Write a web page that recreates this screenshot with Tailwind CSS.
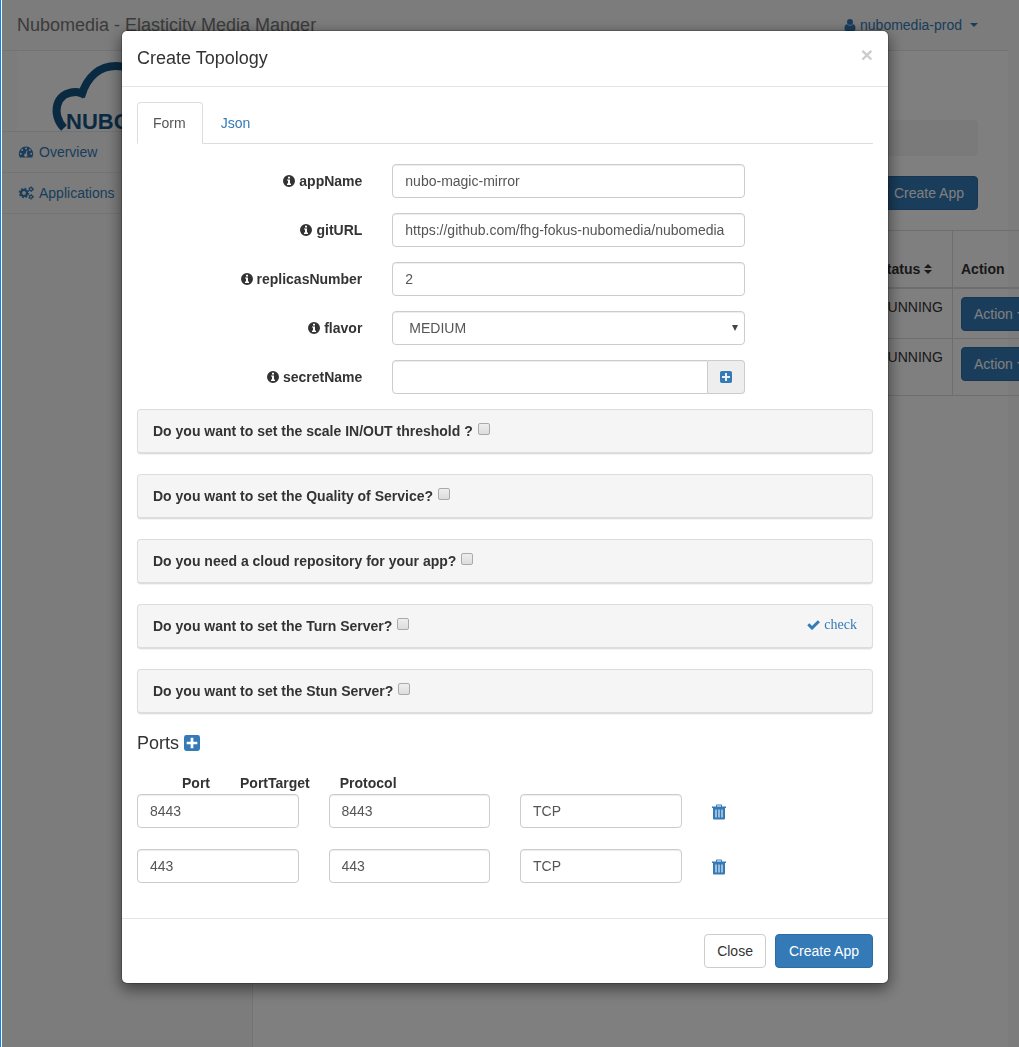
<!DOCTYPE html>
<html lang="en">
<head>
<meta charset="utf-8">
<meta name="viewport" content="width=device-width, initial-scale=1">
<title>Nubomedia - Create Topology</title>
<script src="https://cdn.jsdelivr.net/npm/@tailwindcss/browser@4"></script>
</head>
<body class="font-['Liberation_Sans',Arial,sans-serif] text-sm text-[#333] bg-[#f8f8f8]">

<!-- Shared icons -->
<svg class="hidden" aria-hidden="true">
  <symbol id="info" viewBox="0 0 12 12"><path fill="currentColor" fill-rule="evenodd" d="M6 0a6 6 0 1 1 0 12A6 6 0 0 1 6 0ZM5 1.800v1.700h2V1.800H5ZM4 4.500v1h1v3H4v1.500h4V8.500H7v-4H4Z"/></symbol>
  <symbol id="plus" viewBox="0 0 12 12"><path fill="currentColor" fill-rule="evenodd" d="M1.800 0h8.400A1.800 1.800 0 0 1 12 1.800v8.400A1.800 1.800 0 0 1 10.200 12H1.800A1.800 1.800 0 0 1 0 10.200V1.800A1.800 1.800 0 0 1 1.800 0ZM5 2V5H2v2h3v3h2V7h3V5H7V2H5Z"/></symbol>
  <symbol id="trash" viewBox="0 0 14 16"><path fill="currentColor" fill-rule="evenodd" d="M4 2.500V1.500Q4 .5 5 .5h4q1 0 1 1v1h4V4h-1v10.500q0 1-1 1H2q-1 0-1-1V4H0V2.500h4Zm1 0h4v-1H5v1ZM3.500 5.500v8h1v-8h-1Zm3 0v8h1v-8h-1Zm3 0v8h1v-8h-1Z"/></symbol>
  <symbol id="caret" viewBox="0 0 8 4"><path fill="currentColor" d="M0 0h8L4 4Z"/></symbol>
</svg>

<div class="border-l border-[#0f82e6]">
<div class="ml-px pr-[11px] flex flex-col min-h-screen overflow-hidden">
  <header class="h-[51px] border-b border-[#e7e7e7] flex items-center justify-between pl-[15px] pr-[30px]">
    <a href="#" class="text-lg text-[#777] whitespace-nowrap">Nubomedia - Elasticity Media Manger</a>
    <a href="#" class="flex items-center text-[#337ab7]">
      <svg class="w-3 h-3 mr-1" viewBox="0 0 12 12" fill="currentColor"><circle cx="6" cy="3" r="3"/><path d="M3 5.300Q6 8 9 5.300Q11.500 5.500 11.500 9.800Q11.500 12 9.500 12h-7Q.5 12 .5 9.800Q.5 5.500 3 5.300Z"/></svg>
      nubomedia-prod
      <svg class="w-2 h-1 ml-2"><use href="#caret"/></svg>
    </a>
  </header>
  <div class="flex grow">
    <nav class="w-[251px] shrink-0 border-r border-[#e7e7e7]">
      <div class="pl-[15px] h-[81px] border-b border-[#e7e7e7]">
        <svg class="w-full h-20 bg-[#fdfdfd]" viewBox="0 0 235 80" preserveAspectRatio="xMinYMin slice">
          <g fill="none" stroke="#145585" stroke-width="8">
            <path d="M47 77C34 64 38 41 59 41Q63 41 68 44"/>
            <path d="M64 46C70 24 84 15 99 15C119 15 131 25 134 40"/>
          </g>
          <text x="49" y="78" font-family="Liberation Sans, sans-serif" font-weight="bold" font-size="22" fill="#145585">NUBOMEDIA</text>
        </svg>
      </div>
      <ul class="text-[#337ab7]">
        <li class="border-b border-[#e7e7e7]"><a href="#" class="flex items-center gap-1 h-10 px-[15px]">
          <svg class="w-[18px] h-[14px]" viewBox="0 0 18 14"><path fill="currentColor" fill-rule="evenodd" d="M9 1.500a7.200 7.200 0 0 1 7.200 7.300q0 2-1 3.700H2.800q-1-1.700-1-3.700A7.200 7.200 0 0 1 9 1.500ZM9 2.500a1 1 0 1 0 0 2 1 1 0 0 0 0-2ZM5.200 4a1 1 0 1 0 0 2 1 1 0 0 0 0-2Zm7.600 0a1 1 0 1 0 0 2 1 1 0 0 0 0-2ZM3.800 7.800a1 1 0 1 0 0 2 1 1 0 0 0 0-2Zm10.400 0a1 1 0 1 0 0 2 1 1 0 0 0 0-2ZM9.600 5.500 8.800 8.600a1.600 1.600 0 1 0 1 .3l.8-3.100Z"/></svg>
          Overview</a></li>
        <li class="border-b border-[#e7e7e7]"><a href="#" class="flex items-center gap-1 h-10 px-[15px]">
          <svg class="w-[18px] h-[14px]" viewBox="0 0 18 14" fill="none" stroke="currentColor"><circle cx="7" cy="7" r="3" stroke-width="2.200"/><circle cx="7" cy="7" r="4.500" stroke-width="1.500" stroke-dasharray="1.770 1.765"/><circle cx="14" cy="3.200" r="1.500" stroke-width="1.200"/><circle cx="14" cy="3.200" r="2.300" stroke-width="1" stroke-dasharray="1.200 1.200"/><circle cx="14" cy="10.800" r="1.500" stroke-width="1.200"/><circle cx="14" cy="10.800" r="2.300" stroke-width="1" stroke-dasharray="1.200 1.200"/></svg>
          Applications</a></li>
      </ul>
    </nav>
    <main class="grow min-w-0 bg-white px-[30px] pt-[69px]">
      <div class="h-9 rounded bg-[#f5f5f5]"></div>
      <div class="flex justify-end mt-5">
        <button class="h-[34px] px-[13px] rounded border border-[#2e6da4] bg-[#337ab7] text-white">Create App</button>
      </div>
      <table class="mt-5 w-[760px] table-fixed border-collapse border border-[#ddd] text-left">
        <thead>
          <tr class="h-[57px] align-bottom border-b-2 border-[#ddd]">
            <td></td>
            <th class="w-[83px] p-2 border-r border-[#ddd] leading-5 whitespace-nowrap">Status <svg class="inline w-2 h-[10px] -mt-0.5" viewBox="0 0 8 10" fill="currentColor"><path d="M0 4 4 0l4 4ZM0 6h8l-4 4Z"/></svg></th>
            <th class="w-[90px] p-2 leading-5">Action</th>
          </tr>
        </thead>
        <tbody>
          <tr class="h-[51px] align-top border-b border-[#ddd]">
            <td></td><td class="p-2 border-r border-[#ddd]">RUNNING</td>
            <td class="px-2 pt-2"><button class="flex items-center gap-1 h-[34px] px-3 rounded border border-[#2e6da4] bg-[#337ab7] text-white">Action <svg class="w-2 h-1"><use href="#caret"/></svg></button></td>
          </tr>
          <tr class="h-[57px] align-top">
            <td></td><td class="p-2 border-r border-[#ddd]">RUNNING</td>
            <td class="px-2 pt-2"><button class="flex items-center gap-1 h-[34px] px-3 rounded border border-[#2e6da4] bg-[#337ab7] text-white">Action <svg class="w-2 h-1"><use href="#caret"/></svg></button></td>
          </tr>
        </tbody>
      </table>
    </main>
  </div>
</div>
</div>

<!-- Modal -->
<div class="fixed inset-y-0 right-0 left-0.5 overflow-auto bg-black/50 pt-[30px] pr-[11px]">
  <section role="dialog" aria-labelledby="dialog-title" class="mx-auto max-w-[768px] rounded-md border border-black/20 bg-white bg-clip-padding shadow-[0_5px_15px_rgba(0,0,0,0.5)]">
    <div class="flex justify-between p-[15px] h-14 border-b border-[#e5e5e5]">
      <h4 id="dialog-title" class="text-lg leading-6">Create Topology</h4>
      <button aria-label="Close" class="self-start h-[18px] text-[21px] leading-[18px] font-bold text-[#ccc]">×</button>
    </div>
    <div class="p-[15px]">
      <div class="flex h-[42px] border-b border-[#ddd]">
        <a href="#" class="h-[42px] pl-[15px] pr-4 leading-10 rounded-t border border-[#ddd] border-b-white bg-white text-[#555]">Form</a>
        <a href="#" class="ml-0.5 px-4 leading-[42px] text-[#337ab7]">Json</a>
      </div>

      <form>
        <div class="-mx-[15px] mt-5 grid grid-cols-[4fr_6fr_2fr] gap-y-[15px] *:mx-[15px]">
          <label for="appName" class="col-start-1 flex items-center justify-end gap-1 font-bold"><svg class="size-3"><use href="#info"/></svg>appName</label>
          <input id="appName" value="nubo-magic-mirror" class="min-w-0 h-[34px] px-3 rounded border border-[#ccc] text-[#555] shadow-[inset_0_1px_1px_rgba(0,0,0,0.075)]">

          <label for="gitURL" class="col-start-1 flex items-center justify-end gap-1 font-bold"><svg class="size-3"><use href="#info"/></svg>gitURL</label>
          <input id="gitURL" value="https://github.com/fhg-fokus-nubomedia/nubomedia" class="min-w-0 h-[34px] px-3 rounded border border-[#ccc] text-[#555] shadow-[inset_0_1px_1px_rgba(0,0,0,0.075)]">

          <label for="replicas" class="col-start-1 flex items-center justify-end gap-1 font-bold"><svg class="size-3"><use href="#info"/></svg>replicasNumber</label>
          <input id="replicas" value="2" class="min-w-0 h-[34px] px-3 rounded border border-[#ccc] text-[#555] shadow-[inset_0_1px_1px_rgba(0,0,0,0.075)]">

          <label for="flavor" class="col-start-1 flex items-center justify-end gap-1 font-bold"><svg class="size-3"><use href="#info"/></svg>flavor</label>
          <div class="relative flex">
            <select id="flavor" class="grow appearance-none h-[34px] px-4 rounded border border-[#ccc] bg-white text-[#555] shadow-[inset_0_1px_1px_rgba(0,0,0,0.075)]"><option>MEDIUM</option></select>
            <svg class="absolute right-[7px] top-[14px] w-1.5 h-1.5 pointer-events-none text-[#444]" viewBox="0 0 6 6"><path fill="currentColor" d="M0 0h6L3 6Z"/></svg>
          </div>

          <label for="secret" class="col-start-1 flex items-center justify-end gap-1 font-bold"><svg class="size-3"><use href="#info"/></svg>secretName</label>
          <div class="flex">
            <input id="secret" class="min-w-0 grow h-[34px] px-3 rounded-l border border-[#ccc] text-[#555] shadow-[inset_0_1px_1px_rgba(0,0,0,0.075)]">
            <button type="button" aria-label="Add secret" class="w-[37px] flex items-center justify-center rounded-r border border-l-0 border-[#ccc] bg-[#eee] text-[#337ab7]"><svg class="size-3"><use href="#plus"/></svg></button>
          </div>
        </div>

        <div class="mt-[15px] flex flex-col gap-5 font-bold">
          <div class="flex items-center h-[45px] px-[15px] rounded border border-b-2 border-[#ddd] bg-[#f5f5f5] shadow-[0_1px_1px_rgba(0,0,0,0.05)]">
            <label for="scale">Do you want to set the scale IN/OUT threshold ?</label>
            <input id="scale" type="checkbox" class="ml-[5px] mb-1 size-3 appearance-none rounded-xs border border-[#aaa] bg-linear-to-b from-[#eee] to-[#dcdcdc]">
          </div>
          <div class="flex items-center h-[45px] px-[15px] rounded border border-b-2 border-[#ddd] bg-[#f5f5f5] shadow-[0_1px_1px_rgba(0,0,0,0.05)]">
            <label for="qos">Do you want to set the Quality of Service?</label>
            <input id="qos" type="checkbox" class="ml-[5px] mb-1 size-3 appearance-none rounded-xs border border-[#aaa] bg-linear-to-b from-[#eee] to-[#dcdcdc]">
          </div>
          <div class="flex items-center h-[45px] px-[15px] rounded border border-b-2 border-[#ddd] bg-[#f5f5f5] shadow-[0_1px_1px_rgba(0,0,0,0.05)]">
            <label for="repo">Do you need a cloud repository for your app?</label>
            <input id="repo" type="checkbox" class="ml-[5px] mb-1 size-3 appearance-none rounded-xs border border-[#aaa] bg-linear-to-b from-[#eee] to-[#dcdcdc]">
          </div>
          <div class="flex items-center h-[45px] px-[15px] rounded border border-b-2 border-[#ddd] bg-[#f5f5f5] shadow-[0_1px_1px_rgba(0,0,0,0.05)]">
            <label for="turn">Do you want to set the Turn Server?</label>
            <input id="turn" type="checkbox" class="ml-[5px] mb-1 size-3 appearance-none rounded-xs border border-[#aaa] bg-linear-to-b from-[#eee] to-[#dcdcdc]">
            <a href="#" class="ml-auto mb-0.5 flex items-center gap-1 font-normal font-['Liberation_Serif',serif] text-[#337ab7]"><svg class="w-[13px] h-[10px]" viewBox="0 0 13 10"><path fill="none" stroke="currentColor" stroke-width="3" d="m1.300 4.300 3.700 3.700L11.900 1.200"/></svg>check</a>
          </div>
          <div class="flex items-center h-[45px] px-[15px] rounded border border-b-2 border-[#ddd] bg-[#f5f5f5] shadow-[0_1px_1px_rgba(0,0,0,0.05)]">
            <label for="stun">Do you want to set the Stun Server?</label>
            <input id="stun" type="checkbox" class="ml-[5px] mb-1 size-3 appearance-none rounded-xs border border-[#aaa] bg-linear-to-b from-[#eee] to-[#dcdcdc]">
          </div>
        </div>

        <h4 class="mt-[19px] flex items-center gap-[5px] text-lg leading-5">Ports <button type="button" aria-label="Add port" class="text-[#337ab7]"><svg class="size-4"><use href="#plus"/></svg></button></h4>

        <div class="mt-5 flex gap-[30px] pl-[45px] font-bold leading-5">
          <span id="port">Port</span><span id="target">PortTarget</span><span id="protocol">Protocol</span>
        </div>
        <div class="mt-px mb-5 grid grid-cols-4 items-center gap-x-[30px] gap-y-[21px]">
          <input aria-labelledby="port" value="8443" class="min-w-0 h-[34px] px-3 rounded border border-[#ccc] text-[#555] shadow-[inset_0_1px_1px_rgba(0,0,0,0.075)]">
          <input aria-labelledby="target" value="8443" class="min-w-0 h-[34px] px-3 rounded border border-[#ccc] text-[#555] shadow-[inset_0_1px_1px_rgba(0,0,0,0.075)]">
          <input aria-labelledby="protocol" value="TCP" class="min-w-0 h-[34px] px-3 rounded border border-[#ccc] text-[#555] shadow-[inset_0_1px_1px_rgba(0,0,0,0.075)]">
          <button type="button" aria-label="Delete port" class="justify-self-start pt-0.5 text-[#337ab7]"><svg class="w-3.5 h-4"><use href="#trash"/></svg></button>
          <input aria-labelledby="port" value="443" class="min-w-0 h-[34px] px-3 rounded border border-[#ccc] text-[#555] shadow-[inset_0_1px_1px_rgba(0,0,0,0.075)]">
          <input aria-labelledby="target" value="443" class="min-w-0 h-[34px] px-3 rounded border border-[#ccc] text-[#555] shadow-[inset_0_1px_1px_rgba(0,0,0,0.075)]">
          <input aria-labelledby="protocol" value="TCP" class="min-w-0 h-[34px] px-3 rounded border border-[#ccc] text-[#555] shadow-[inset_0_1px_1px_rgba(0,0,0,0.075)]">
          <button type="button" aria-label="Delete port" class="justify-self-start pt-0.5 text-[#337ab7]"><svg class="w-3.5 h-4"><use href="#trash"/></svg></button>
        </div>
      </form>
    </div>
    <div class="flex justify-end gap-[9px] p-[15px] border-t border-[#e5e5e5]">
      <button class="h-[34px] px-3 rounded border border-[#ccc] bg-white">Close</button>
      <button class="h-[34px] px-[13px] rounded border border-[#2e6da4] bg-[#337ab7] text-white">Create App</button>
    </div>
  </section>
</div>
</body>
</html>
